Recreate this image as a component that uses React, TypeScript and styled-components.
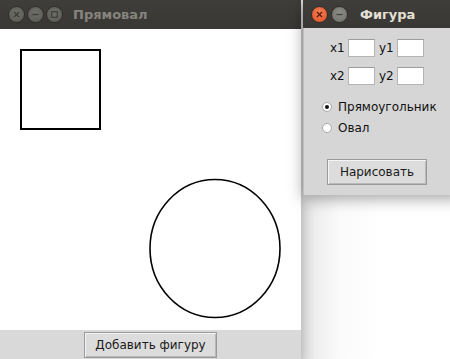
import styled, { createGlobalStyle } from "styled-components"

const Global = createGlobalStyle`
  html, body { margin: 0; padding: 0; }
  body {
    width: 450px;
    height: 359px;
    overflow: hidden;
    background: #ffffff;
    font-family: "DejaVu Sans", "Liberation Sans", sans-serif;
  }
`

const Desktop = styled.div`
  position: relative;
  width: 450px;
  height: 359px;
  overflow: hidden;
  background: linear-gradient(to right, #d8d8d8 0px, #ececec 310px, #fbfbfb 340px, #ffffff 380px);
`

const Window = styled.div<{ $left: number; $top: number; $w: number; $h: number }>`
  position: absolute;
  left: ${(p) => p.$left}px;
  top: ${(p) => p.$top}px;
  width: ${(p) => p.$w}px;
  height: ${(p) => p.$h}px;
  display: flex;
  flex-direction: column;
  box-shadow: 0 4px 14px rgba(0, 0, 0, 0.35);
`

const TitleBar = styled.div<{ $h: number; $gap: number }>`
  height: ${(p) => p.$h}px;
  flex: none;
  display: flex;
  align-items: center;
  gap: ${(p) => p.$gap}px;
  padding-left: 8px;
  background: linear-gradient(#3f3e3a, #383733);
`

const WinButton = styled.span<{ $kind: "close" | "min" | "off" }>`
  width: 15px;
  height: 15px;
  border-radius: 50%;
  flex: none;
  display: flex;
  align-items: center;
  justify-content: center;
  background: ${(p) =>
    p.$kind === "close"
      ? "radial-gradient(circle at 50% 40%, #f3825a, #df4b1f)"
      : p.$kind === "min"
      ? "radial-gradient(circle at 50% 40%, #8e8e89, #6c6c68)"
      : "radial-gradient(circle at 50% 40%, #6e6e6a, #595954)"};
  border: 1px solid #2e2d2a;
  svg {
    display: block;
  }
`

const Title = styled.span<{ $dim?: boolean; $gap: number }>`
  margin-left: ${(p) => p.$gap}px;
  font-size: 13px;
  font-weight: bold;
  color: ${(p) => (p.$dim ? "#85847e" : "#e4e0d8")};
`

const Canvas = styled.div`
  height: 301px;
  flex: none;
  background: #ffffff;
`

const BottomBar = styled.div`
  flex: 1;
  display: flex;
  justify-content: center;
  align-items: flex-start;
  padding-top: 2px;
  background: #d9d9d9;
`

const Button = styled.button<{ $w: number }>`
  width: ${(p) => p.$w}px;
  height: 26px;
  padding: 0;
  font-family: "DejaVu Sans", "Liberation Sans", sans-serif;
  font-size: 12px;
  color: #1a1a1a;
  background: #dcdcdc;
  border: 1px solid #9a9a9a;
  box-shadow: inset 1px 1px 0 #f4f4f4, inset -1px -1px 0 #b8b8b8;
`

const DialogBody = styled.div`
  flex: 1;
  background: #d6d6d6;
  border-left: 1px solid #bdbdbd;
  padding: 11px 0 0 0;
  display: flex;
  flex-direction: column;
`

const CoordRow = styled.div`
  display: flex;
  align-items: center;
  height: 18px;
  margin-left: 26px;
  margin-bottom: 10px;
  font-size: 12px;
  color: #111;
`

const Label = styled.span`
  width: 18px;
  text-align: left;
`

const Entry = styled.input`
  width: 27px;
  height: 18px;
  box-sizing: border-box;
  margin: 0 4px 0 0;
  padding: 0;
  border: 1px solid #b4b4b4;
  border-top-color: #9c9c9c;
  background: #ffffff;
  outline: none;
`

const Radios = styled.div`
  margin-top: 1px;
  margin-left: 18px;
  display: flex;
  flex-direction: column;
`

const RadioRow = styled.label`
  display: flex;
  align-items: center;
  height: 21px;
  font-size: 12px;
  color: #111;
  gap: 6px;
`

const RadioMark = styled.span<{ $on?: boolean }>`
  width: 10px;
  height: 10px;
  box-sizing: border-box;
  border-radius: 50%;
  border: 1px solid #a8a8a8;
  background: #ffffff;
  display: flex;
  align-items: center;
  justify-content: center;
  &::after {
    content: "";
    width: 4px;
    height: 4px;
    border-radius: 50%;
    background: ${(p) => (p.$on ? "#111" : "transparent")};
  }
`

const DialogFooter = styled.div`
  margin-top: 21px;
  margin-left: 23px;
`

function CloseGlyph({ color }: { color: string }) {
  return (
    <svg width="7" height="7" viewBox="0 0 7 7">
      <path d="M1 1L6 6M6 1L1 6" stroke={color} strokeWidth="1.4" />
    </svg>
  )
}

function MinGlyph({ color }: { color: string }) {
  return (
    <svg width="7" height="7" viewBox="0 0 7 7">
      <path d="M0.5 3.5H6.5" stroke={color} strokeWidth="1.4" />
    </svg>
  )
}

function MaxGlyph({ color }: { color: string }) {
  return (
    <svg width="7" height="7" viewBox="0 0 7 7">
      <rect x="0.7" y="0.7" width="5.6" height="5.6" fill="none" stroke={color} strokeWidth="1.2" />
    </svg>
  )
}

export default function App() {
  return (
    <>
      <Global />
      <Desktop>
        <Window $left={0} $top={0} $w={301} $h={362}>
          <TitleBar $h={29} $gap={2}>
            <WinButton $kind="off">
              <CloseGlyph color="#3e3d39" />
            </WinButton>
            <WinButton $kind="off">
              <MinGlyph color="#3e3d39" />
            </WinButton>
            <WinButton $kind="off">
              <MaxGlyph color="#3e3d39" />
            </WinButton>
            <Title $dim $gap={8}>Прямовал</Title>
          </TitleBar>
          <Canvas>
            <svg width="301" height="301" viewBox="0 0 301 301">
              <rect x="21" y="21" width="79" height="79" fill="none" stroke="#000" strokeWidth="2" />
              <ellipse cx="215" cy="219.5" rx="65" ry="69" fill="none" stroke="#000" strokeWidth="1.6" />
            </svg>
          </Canvas>
          <BottomBar>
            <Button $w={133}>Добавить фигуру</Button>
          </BottomBar>
        </Window>
        <Window $left={303} $top={0} $w={160} $h={195}>
          <TitleBar $h={28} $gap={3}>
            <WinButton $kind="close">
              <CloseGlyph color="#5a1a08" />
            </WinButton>
            <WinButton $kind="min">
              <MinGlyph color="#45443f" />
            </WinButton>
            <Title $gap={9}>Фигура</Title>
          </TitleBar>
          <DialogBody>
            <CoordRow>
              <Label>x1</Label>
              <Entry />
              <Label>y1</Label>
              <Entry />
            </CoordRow>
            <CoordRow>
              <Label>x2</Label>
              <Entry />
              <Label>y2</Label>
              <Entry />
            </CoordRow>
            <Radios>
              <RadioRow>
                <RadioMark $on />
                Прямоугольник
              </RadioRow>
              <RadioRow>
                <RadioMark />
                Овал
              </RadioRow>
            </Radios>
            <DialogFooter>
              <Button $w={100}>Нарисовать</Button>
            </DialogFooter>
          </DialogBody>
        </Window>
      </Desktop>
    </>
  )
}
